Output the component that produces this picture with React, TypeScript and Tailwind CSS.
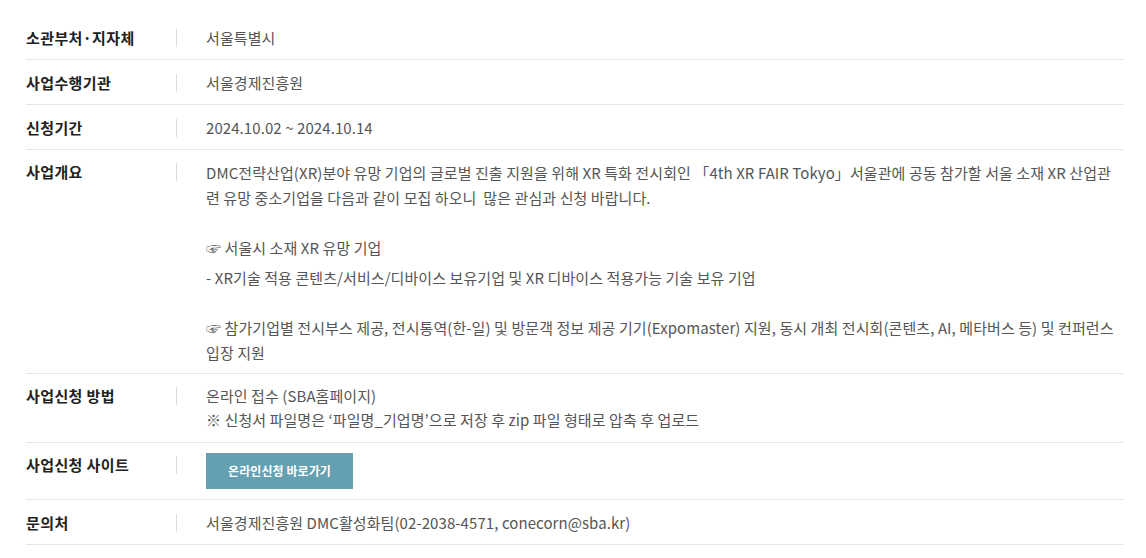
const font = { fontFamily: '"Noto Sans CJK KR", "Noto Sans", sans-serif' };

type Row = { label: string; content: React.ReactNode; pad?: string };

function Row({ label, content, pad = "pt-[11px] pb-[9px]" }: Row) {
  return (
    <div className={`flex border-b border-[#e6e6e6] ${pad}`}>
      <div className="w-[150px] shrink-0 text-[15px] font-bold leading-[24px] tracking-[0.4px] text-[#222]">{label}</div>
      <div className="mt-[3px] h-[18px] w-px shrink-0 bg-[#dcdcdc]" />
      <div className="flex-1 break-all pl-[29px] text-[15px] leading-[24px] tracking-[0.08px] text-[#555]">{content}</div>
    </div>
  );
}

export default function App() {
  return (
    <div className="min-h-[558px] bg-white pt-[15px]" style={font}>
      <div className="ml-[26px] w-[1098px]">
        <Row label="소관부처·지자체" content="서울특별시" />
        <Row label="사업수행기관" content="서울경제진흥원" />
        <Row label="신청기간" content="2024.10.02 ~ 2024.10.14" />
        <Row
          label="사업개요"
          pad="pt-[10px] pb-[8px]"
          content={
            <div className="leading-[25px]">
              <p>
                DMC전략산업(XR)분야 유망 기업의 글로벌 진출 지원을 위해 XR 특화 전시회인 「4th XR FAIR Tokyo」서울관에 공동 참가할 서울 소재 XR 산업관련 유망 중소기업을 다음과 같이 모집 하오니&nbsp; 많은 관심과 신청 바랍니다.
              </p>
              <p className="mt-[25px]">☞ 서울시 소재 XR 유망 기업</p>
              <p className="mt-[5px]">- XR기술 적용 콘텐츠/서비스/디바이스 보유기업 및 XR 디바이스 적용가능 기술 보유 기업</p>
              <p className="mt-[25px]">
                ☞ 참가기업별 전시부스 제공, 전시통역(한-일) 및 방문객 정보 제공 기기(Expomaster) 지원, 동시 개최 전시회(콘텐츠, AI, 메타버스 등) 및 컨퍼런스 입장 지원
              </p>
            </div>
          }
        />
        <Row
          label="사업신청 방법"
          pad="pt-[10px] pb-[10px]"
          content={
            <div className="leading-[24px]">
              <p>온라인 접수 (SBA홈페이지)</p>
              <p>※ 신청서 파일명은 ‘파일명_기업명’으로 저장 후 zip 파일 형태로 압축 후 업로드</p>
            </div>
          }
        />
        <Row
          label="사업신청 사이트"
          pad="pt-[10px] pb-[10px]"
          content={
            <button className="flex h-[36px] w-[147px] items-center justify-center bg-[#64a0b2] text-[12px] font-bold text-white">
              온라인신청 바로가기
            </button>
          }
        />
        <Row label="문의처" content="서울경제진흥원 DMC활성화팀(02-2038-4571, conecorn@sba.kr)" />
      </div>
    </div>
  );
}
